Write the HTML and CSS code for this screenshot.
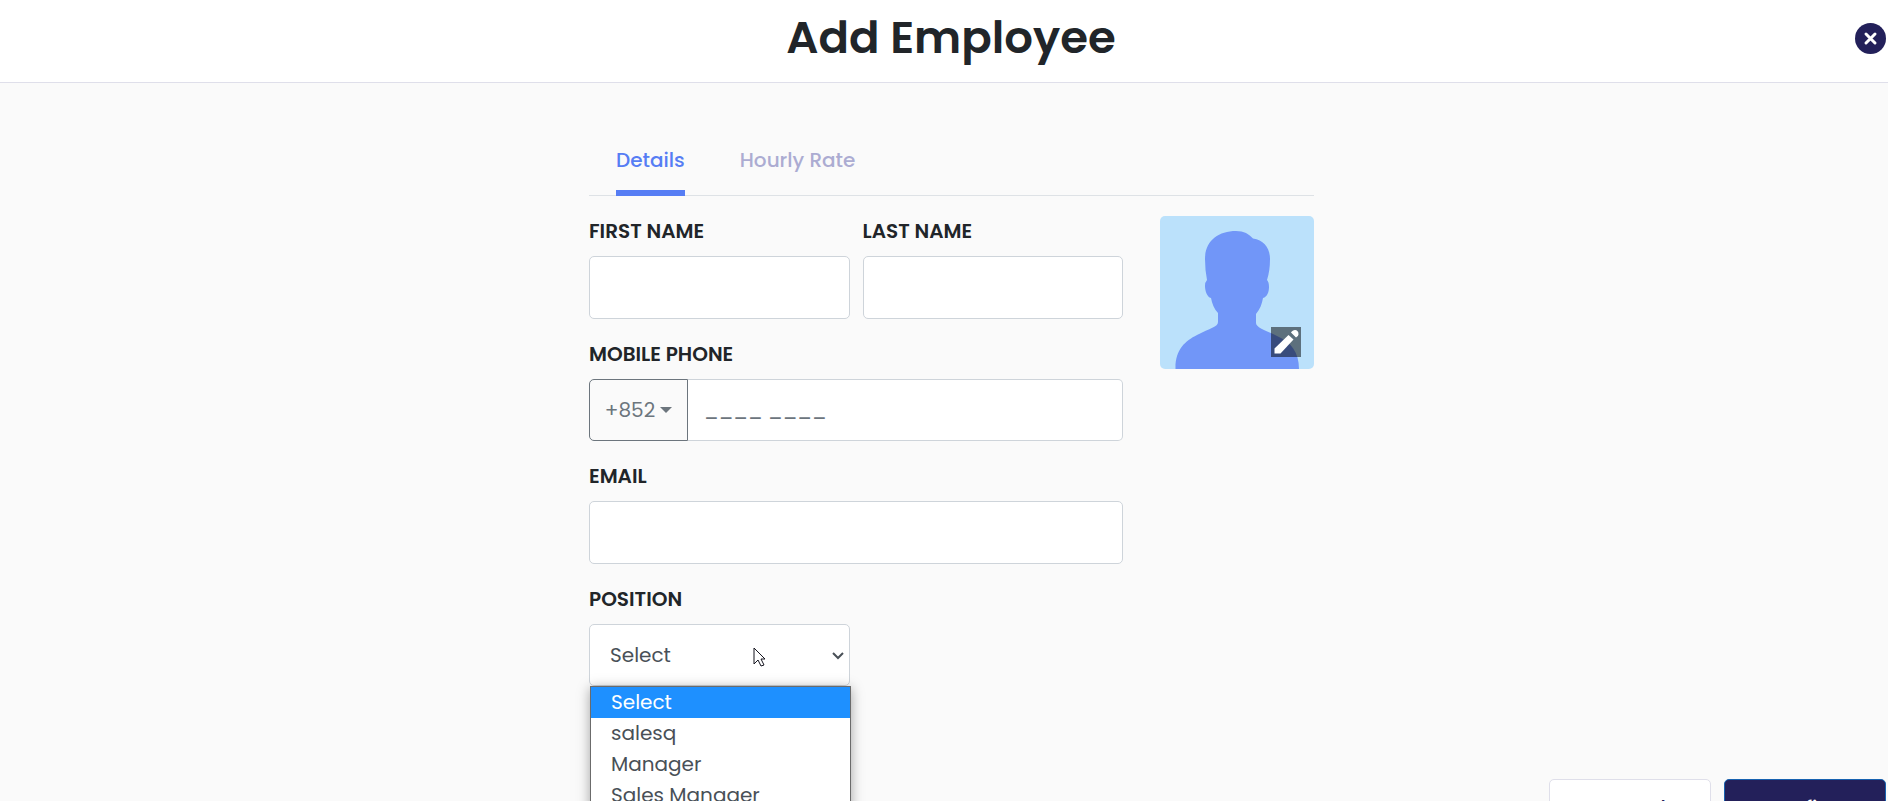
FILE: index.html
```
<!DOCTYPE html>
<html lang="en">
<head>
    <meta charset="UTF-8">
    <meta name="viewport" content="width=device-width, initial-scale=1.0">
    <title>Add Employee</title>
    <link rel="stylesheet" href="styles.css">
</head>
<body>
    <div class="page">
        <header class="page-header">
            <h1>Add Employee</h1>
            <button type="button" class="close-btn" aria-label="Close">
                <svg viewBox="0 0 31 31" width="31" height="31">
                    <path d="M11 11l9 9M20 11l-9 9" stroke="#fff" stroke-width="3" stroke-linecap="round"/>
                </svg>
            </button>
        </header>

        <main class="content">
            <nav class="tabs">
                <a href="#details" class="tab active">Details</a>
                <a href="#rate" class="tab">Hourly Rate</a>
            </nav>

            <div class="details" id="details">
                <form class="employee-form" id="employeeForm">
                    <div class="row">
                        <div class="field">
                            <label for="firstName">FIRST NAME</label>
                            <input type="text" id="firstName" class="form-control">
                        </div>
                        <div class="field">
                            <label for="lastName">LAST NAME</label>
                            <input type="text" id="lastName" class="form-control">
                        </div>
                    </div>

                    <div class="field">
                        <label for="phone">MOBILE PHONE</label>
                        <div class="input-group">
                            <button type="button" class="prefix-btn">+852<span class="caret"></span></button>
                            <input type="tel" id="phone" class="form-control" placeholder="____ ____">
                        </div>
                    </div>

                    <div class="field">
                        <label for="email">EMAIL</label>
                        <input type="email" id="email" class="form-control">
                    </div>

                    <div class="row">
                        <div class="field">
                            <label for="position">POSITION</label>
                            <div class="select-wrap">
                                <select id="position" class="form-control">
                                    <option>Select</option>
                                    <option>salesq</option>
                                    <option>Manager</option>
                                    <option>Sales Manager</option>
                                </select>
                                <svg class="chevron" viewBox="0 0 12 8" width="12" height="8">
                                    <path d="M1 1l5 5 5-5" fill="none" stroke="#495057" stroke-width="2"/>
                                </svg>
                                <ul class="options">
                                    <li class="selected">Select</li>
                                    <li>salesq</li>
                                    <li>Manager</li>
                                    <li>Sales Manager</li>
                                </ul>
                                <svg class="pointer" viewBox="0 0 13 20" width="13" height="20">
                                    <path d="M1 1v16l4-4 3 6 3-1-3-6h4z" fill="#fff" stroke="#15151f" stroke-width="1"/>
                                </svg>
                            </div>
                        </div>
                        <div class="field"></div>
                    </div>
                </form>

                <div class="avatar">
                    <svg class="avatar-img" viewBox="0 0 154 153">
                        <path fill="#7196f8" d="M15.500 153C15 134 25 125 37 119C50 112 58 111 58 106V97C54 93 52 87 51 82C47 81 45 75 45 70Q45 66 47 64Q45 54 45 43C45 25 58 15 76 15C84 15 89 18 93 22.500C104 24 110 32 110 43Q110 55 107 64Q109 66 109 71C109 76 107 81 103 82C102 88 100 93 96 98V107C96 112 108 115 117 120C131 126 139 136 139 153Z"/>
                    </svg>
                    <button type="button" class="edit-btn" aria-label="Edit photo">
                        <svg viewBox="0 0 30 30" width="30" height="30" fill="#fff">
                            <path d="M3.500 21.500L17.500 8l5 4.500L9.500 26.500H3.500z"/>
                            <path d="M20 5.500C22 1.500 28 2 27.500 7.500Q27.500 9 25 10.500Z"/>
                        </svg>
                    </button>
                </div>
            </div>
        </main>

        <footer class="page-footer">
            <button type="button" class="btn btn-cancel">Cancel</button>
            <button type="submit" form="employeeForm" class="btn btn-confirm">Confirm</button>
        </footer>
    </div>
</body>
</html>
```

FILE: styles.css
```
* {
    box-sizing: border-box;
}

body {
    margin: 0;
    font-family: Poppins, Inter, sans-serif;
    font-size: 20px;
    line-height: 30px;
    color: #212529;
    background-color: #fafafa;
}

button,
input,
select {
    font: inherit;
}

.page {
    height: 100vh;
    overflow: hidden;
}

/* header */
.page-header {
    display: grid;
    grid-template-columns: 1fr auto 1fr;
    align-items: center;
    padding: 10px 2px 16px 16px;
    background-color: #fff;
    border-bottom: 1px solid #dfdfea;
}

.page-header h1 {
    grid-column: 2;
    margin: 0;
    font-size: 45px;
    font-weight: 600;
    line-height: 56px;
}

.close-btn {
    justify-self: end;
    width: 31px;
    height: 31px;
    padding: 0;
    border: 0;
    border-radius: 50%;
    background-color: #23205a;
}

.close-btn svg,
.edit-btn svg {
    display: block;
}

.content {
    width: 740px;
    max-width: 100%;
    margin: 0 auto;
    padding: 62px 0 0 15px;
}

/* tabs */
.tabs {
    display: flex;
    gap: 55px;
    padding: 0 27px;
    border-bottom: 1px solid #dee2e6;
}

.tab {
    padding-bottom: 15px;
    margin-bottom: -1px;
    border-bottom: 6px solid transparent;
    font-weight: 500;
    color: #acacd2;
    text-decoration: none;
}

.tab.active {
    color: #567df4;
    border-bottom-color: #567df4;
}

/* form */
.details {
    display: flex;
    align-items: flex-start;
    gap: 37px;
    padding-top: 20px;
}

.employee-form {
    flex: 1;
    display: flex;
    flex-direction: column;
    gap: 20px;
}

.row {
    display: flex;
    gap: 13px;
}

.field {
    flex: 1;
    min-width: 0;
}

.field label {
    display: block;
    margin-bottom: 10px;
    font-weight: 600;
}

.form-control {
    display: block;
    width: 100%;
    height: 63px;
    padding: 0 20px;
    border: 1px solid #ced4da;
    border-radius: 5px;
    background-color: #fff;
    color: #495057;
}

.input-group {
    display: flex;
}

.input-group .form-control {
    flex: 1;
    height: 62px;
    padding-left: 16px;
    border-left: 0;
    border-radius: 0 5px 5px 0;
}

.form-control::placeholder {
    color: #6c757d;
    opacity: 1;
}

.prefix-btn {
    display: flex;
    align-items: center;
    justify-content: center;
    gap: 5px;
    width: 99px;
    padding: 0;
    border: 1px solid #6c757d;
    border-radius: 5px 0 0 5px;
    background-color: #fafafa;
    color: #6c757d;
}

.caret {
    border-top: 6px solid #6c757d;
    border-left: 6px solid transparent;
    border-right: 6px solid transparent;
}

/* position dropdown */
.select-wrap {
    position: relative;
}

.select-wrap select {
    appearance: none;
    height: 62px;
}

.chevron {
    position: absolute;
    top: 28px;
    right: 6px;
}

.options {
    position: absolute;
    top: 62px;
    left: 1px;
    width: 100%;
    margin: 0;
    padding: 0;
    list-style: none;
    border: 1px solid #6b6b6b;
    background-color: #fff;
    box-shadow: 0 2px 12px rgba(0, 0, 0, 0.35);
    color: #495057;
}

.options li {
    padding: 0 20px;
    line-height: 31px;
}

.options .selected {
    background-color: #1e90ff;
    color: #fff;
}

.pointer {
    position: absolute;
    top: 23px;
    left: 164px;
}

/* photo */
.avatar {
    position: relative;
    width: 154px;
    border-radius: 5px;
    overflow: hidden;
    background-color: #bbe1fb;
}

.avatar-img {
    display: block;
    width: 100%;
}

.edit-btn {
    position: absolute;
    right: 13px;
    bottom: 12px;
    width: 30px;
    height: 30px;
    padding: 0;
    border: 0;
    background-color: rgba(0, 0, 0, 0.5);
}

/* footer */
.page-footer {
    display: flex;
    justify-content: flex-end;
    gap: 13px;
    padding: 93px 2px 20px;
}

.btn {
    width: 162px;
    height: 58px;
    border: 1px solid #dfdfea;
    border-radius: 5px;
    background-color: #fff;
    font-weight: 500;
    color: #23205a;
}

.btn-confirm {
    border-color: #1762b0;
    background-color: #23205a;
    color: #fff;
}
```
